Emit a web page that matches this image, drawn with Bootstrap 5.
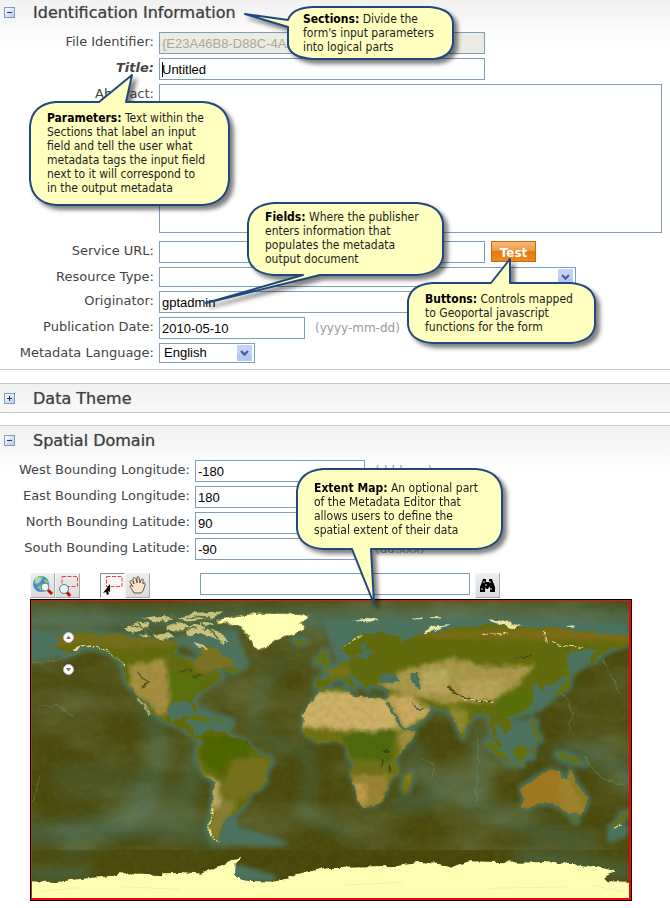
<!DOCTYPE html>
<html lang="en">
<head>
<meta charset="utf-8">
<meta name="viewport" content="width=device-width, initial-scale=1">
<title>Metadata Editor</title>
<link href="https://cdn.jsdelivr.net/npm/bootstrap@5.3.0/dist/css/bootstrap.min.css" rel="stylesheet">
<style>
body{font-family:"DejaVu Sans",Verdana,sans-serif;font-size:13px;color:#444;background:#fff;overflow-x:hidden}
.page{margin-top:-3px}
.panel{border-top:1px solid #c6c6c6;border-bottom:1px solid #c6c6c6;background:linear-gradient(#f1f1f1,#fff 48px);margin-bottom:13px;padding-bottom:6px}
.panel.folded{padding-bottom:0;margin-bottom:12px}
.panel.open-end{border-bottom:0;padding-bottom:7px;margin-bottom:0}
.panel-head{height:28px;padding-left:4px;gap:18px}
.panel-head h2{font-size:16px;line-height:20px;margin:0;padding-top:1px;color:#404040;text-shadow:0 0 1px #8a8a8a}
.toggle{width:11px;height:11px;padding:0;border:1px solid #7f9cc0;background:linear-gradient(135deg,#fff,#b9c9e2);line-height:0;display:block}
.toggle svg{display:block;width:9px;height:9px}
.fields{padding-top:6px;display:grid;row-gap:4px}
.field{display:grid;grid-template-columns:154px minmax(0,1fr);column-gap:5px;align-items:start}
.spatial .field{grid-template-columns:190px minmax(0,1fr)}
.field label{text-align:right;line-height:20px;white-space:nowrap}
.box,.pick{font-family:"Liberation Sans",Arial,sans-serif;font-size:13px;line-height:18px;color:#000;border:1px solid #7f9db9;border-radius:0;box-shadow:none;background-color:#fff}
.box{height:22px;padding:1px 2px;width:100%;max-width:326px;min-height:0}
.box:disabled{background:#ebebe4;color:#aca899;border-color:#7f9db9;opacity:1}
.box.with-caret{background-image:linear-gradient(#000,#000);background-repeat:no-repeat;background-size:1px 15px;background-position:2px 3px}
.box.date{max-width:146px}
.box.degree{max-width:170px}
.box.area{height:149px;max-width:none;resize:none;display:block}
.area-wrap{padding-right:8px;padding-bottom:4px}
.pick{height:20px;padding:0 20px 0 4px;width:100%;max-width:417px;background-position:right 1px center;background-size:17px 16px;background-image:url("data:image/svg+xml,%3Csvg xmlns='http://www.w3.org/2000/svg' viewBox='0 0 17 16'%3E%3Crect x='1' width='15' height='16' rx='1' fill='%23c3d3fd'/%3E%3Crect x='1' y='9' width='15' height='7' fill='%23b5c8f7'/%3E%3Cpath d='M5 6l3.5 3.5L12 6' fill='none' stroke='%234d6185' stroke-width='2.4'/%3E%3C/svg%3E")}
.pick.short{max-width:96px}
.hint{font-size:12px;line-height:22px;color:#999;padding-left:10px}
.url-row{gap:6px}
.go{font-size:12px;font-weight:700;line-height:20px;height:21px;width:45px;padding:1px 0 0;border:1px solid #c86a10;border-radius:0;color:#fff;background:linear-gradient(#f6b878,#ee983f 48%,#e37a12 50%,#ea8b22)}
.go:hover{color:#fff;background:#e37a12}
.tools{padding:13px 0 1px 30px}
.tool{width:25px;height:25px;padding:0;border:1px solid;border-color:#f4f4f4 #a8a8a8 #a8a8a8 #f4f4f4;background:linear-gradient(#ececec,#dcdcdc);border-radius:0}
.tool.pressed{background:#f8f8f8;border-color:#8e8e8e #f4f4f4 #f4f4f4 #8e8e8e}
.tool svg{display:block;width:23px;height:23px}
.tool-gap{width:20px}.tool-gap-wide{width:50px}
.find{max-width:270px;margin-right:5px}
.map-frame{margin-left:30px;margin-right:8px;max-width:602px;border:1px solid #000;line-height:0;background:#4b480f}
.map-frame>svg{display:block;width:100%;height:auto}
.pan{position:absolute;left:32px;width:11px;height:11px;padding:0;border:0;background:none}
.pan svg{display:block;width:11px;height:11px}
.pan.up{top:32px}.pan.down{top:64px}
.note{position:absolute;font-family:"DejaVu Sans Condensed","DejaVu Sans",Tahoma,sans-serif;font-size:12px;line-height:14px;color:#1c1c1c}
.note svg{position:absolute;left:0;top:0;width:100%;height:100%;overflow:visible;filter:drop-shadow(4px 4px 2px rgba(0,0,0,.5))}
.note path{fill:#ffffbf;stroke:#1f497d;stroke-width:2;stroke-linejoin:round}
.note p{position:relative;margin:0;white-space:nowrap;padding:9px 17px}
.note b{color:#000}
.n-section{left:288px;top:7px;width:165px;height:52px}
.n-section p{padding:5px 15px}
.n-param{left:30px;top:102px;width:199px;height:103px}
.n-field{left:248px;top:203px;width:195px;height:72px}
.n-field p{padding-top:7px}
.n-button{left:408px;top:283px;width:187px;height:60px}
.n-map{left:297px;top:469px;width:205px;height:80px}
.n-map p{padding-top:12px}
.n-button p{padding-top:9px}
</style>
<script src="https://cdn.jsdelivr.net/npm/bootstrap@5.3.0/dist/js/bootstrap.bundle.min.js"></script>
</head>
<body class="position-relative">
<main class="page">
  <section class="panel">
    <div class="panel-head d-flex align-items-center">
      <button class="toggle" type="button" aria-label="Collapse Identification Information"><svg viewBox="0 0 9 9"><path d="M2 4.500h5" stroke="#123a78"/></svg></button>
      <h2>Identification Information</h2>
    </div>
    <form class="fields">
      <div class="field"><label for="fid">File Identifier:</label><input id="fid" class="form-control box" disabled value="{E23A46B8-D88C-4AAD-9D5C-6E60B8C1F0A4}"></div>
      <div class="field"><label for="ttl" class="fw-bold fst-italic">Title:</label><input id="ttl" class="form-control box with-caret" value="Untitled"></div>
      <div class="field"><label for="abs">Abstract:</label><div class="area-wrap"><textarea id="abs" class="form-control box area"></textarea></div></div>
      <div class="field"><label for="url">Service URL:</label><div class="d-flex url-row"><input id="url" class="form-control box"><button type="button" class="btn go flex-shrink-0">Test</button></div></div>
      <div class="field"><label for="res">Resource Type:</label><select id="res" class="form-select pick"><option></option></select></div>
      <div class="field"><label for="org">Originator:</label><input id="org" class="form-control box" value="gptadmin"></div>
      <div class="field"><label for="pub">Publication Date:</label><div class="d-flex"><input id="pub" class="form-control box date" value="2010-05-10"><span class="hint">(yyyy-mm-dd)</span></div></div>
      <div class="field"><label for="lang">Metadata Language:</label><select id="lang" class="form-select pick short"><option>English</option></select></div>
    </form>
  </section>

  <section class="panel folded">
    <div class="panel-head d-flex align-items-center">
      <button class="toggle" type="button" aria-label="Expand Data Theme"><svg viewBox="0 0 9 9"><path d="M2 4.500h5M4.500 2v5" stroke="#123a78"/></svg></button>
      <h2>Data Theme</h2>
    </div>
  </section>

  <section class="panel open-end spatial">
    <div class="panel-head d-flex align-items-center">
      <button class="toggle" type="button" aria-label="Collapse Spatial Domain"><svg viewBox="0 0 9 9"><path d="M2 4.500h5" stroke="#123a78"/></svg></button>
      <h2>Spatial Domain</h2>
    </div>
    <form class="fields">
      <div class="field"><label for="w">West Bounding Longitude:</label><div class="d-flex"><input id="w" class="form-control box degree" value="-180"><span class="hint">(ddd.xxx)</span></div></div>
      <div class="field"><label for="e">East Bounding Longitude:</label><div class="d-flex"><input id="e" class="form-control box degree" value="180"></div></div>
      <div class="field"><label for="n">North Bounding Latitude:</label><div class="d-flex"><input id="n" class="form-control box degree" value="90"></div></div>
      <div class="field"><label for="s">South Bounding Latitude:</label><div class="d-flex"><input id="s" class="form-control box degree" value="-90"><span class="hint">(dd.xxx)</span></div></div>
    </form>

    <div class="tools d-flex align-items-start">
      <button type="button" class="tool flex-shrink-0" aria-label="Zoom to world"><svg viewBox="0 0 23 23"><circle cx="10" cy="10" r="8" fill="#3b8fd0"/><path d="M5 4q4-3 7-1l-1 3-3 1-1 4-4-2zM13 5l4 2v4l-3-1zM6 13l4-2 2 3-2 3z" fill="#8fc46c"/><circle cx="7" cy="6" r="3" fill="#dff2ff" opacity=".45"/><path d="M17 16l4 4" stroke="#c40d0d" stroke-width="3"/><circle cx="14" cy="13" r="4" fill="#e8f5fb" stroke="#687b88"/></svg></button>
      <button type="button" class="tool flex-shrink-0" aria-label="Zoom to rectangle"><svg viewBox="0 0 23 23"><path d="M6 2.500h15.500v10H6z" fill="none" stroke="#e8414b" stroke-dasharray="4 1.500"/><path d="M10 17l4 5" stroke="#c40d0d" stroke-width="3"/><circle cx="8" cy="15" r="4.500" fill="#e2f4fb" stroke="#64777f"/></svg></button>
      <span class="tool-gap flex-shrink-0"></span>
      <button type="button" class="tool pressed flex-shrink-0" aria-label="Draw extent"><svg viewBox="0 0 23 23"><path d="M5.500 2.500h15.500v10H5.500z" fill="none" stroke="#e8414b" stroke-dasharray="4 1.500"/><path d="M9 10v8l-2-1 1 3-2 1-1-3-3 1z" fill="#000"/></svg></button>
      <button type="button" class="tool flex-shrink-0" aria-label="Pan"><svg viewBox="0 0 23 23"><path d="M8 19c-1-3-4-5-4-7 0-1 2-1 3 1L4 8c0-2 2-2 3 0l1 2-1-5c0-2 2-2 3 0l1 4V4c0-2 2-2 2 0l1 5 1-3c1-2 3-1 2 1v3c1-2 3-1 2 1-1 3-1 5-4 8z" fill="#fde3c8" stroke="#5f5147"/></svg></button>
      <span class="tool-gap-wide flex-shrink-0"></span>
      <input class="form-control box find" aria-label="Find place">
      <button type="button" class="tool flex-shrink-0" aria-label="Find"><svg viewBox="0 0 23 23"><path d="M7 5h3v3h3V5h3l1 3 2 5v5h-5v-5h-1l-1 2h-2l-1-2v5H4v-5l2-5z" fill="#000"/><path d="M8 7v2M14 7v2M6 14v2M15 14v2M10 10v2" stroke="#ddd"/></svg></button>
    </div>

    <div class="map-frame position-relative">
      <svg viewBox="0 0 600 300" role="img" aria-label="World map">
        <defs>
          <filter id="rough" x="-5%" y="-5%" width="110%" height="110%"><feTurbulence type="fractalNoise" baseFrequency=".035" numOctaves="3" seed="4" result="t"/><feDisplacementMap in="SourceGraphic" in2="t" scale="20" xChannelSelector="R" yChannelSelector="G"/></filter>
          <filter id="soft" x="-20%" y="-20%" width="140%" height="140%"><feGaussianBlur stdDeviation="7"/></filter>
          <filter id="softer" x="-40%" y="-40%" width="180%" height="180%"><feGaussianBlur stdDeviation="20"/></filter>
          <filter id="grain" x="0" y="0" width="100%" height="100%"><feTurbulence type="fractalNoise" baseFrequency=".05 .06" numOctaves="4" seed="9"/><feColorMatrix values="0 0 0 0 .16  0 0 0 0 .18  0 0 0 0 0  1.300 0 0 0 -.5"/></filter>
          <filter id="sheen" x="0" y="0" width="100%" height="100%"><feTurbulence type="fractalNoise" baseFrequency=".004 .008" numOctaves="5" seed="23"/><feColorMatrix values="0 0 0 0 .29  0 0 0 0 .41  0 0 0 0 .3  2.200 0 0 0 -.8"/></filter>
          <path id="america" d="M105 125L140 115 200 115 250 118 300 120 340 125 390 128 440 137 475 143 460 170 480 187 508 190 520 208 530 190 548 178 538 158 562 152 590 164 612 184 640 195 648 210 600 222 572 236 600 232 612 244 582 262 560 276 542 292 535 303 520 314 526 334 530 350 515 336 503 320 480 318 455 326 444 340 442 360 455 378 478 376 488 362 505 362 498 385 514 394 520 415 545 422 570 405 610 410 640 425 680 440 695 460 720 478 754 490 757 505 740 525 737 560 720 580 690 598 680 622 660 645 635 660 612 680 602 700 595 728 602 742 580 742 566 722 564 690 572 650 580 600 582 562 560 545 540 517 528 490 534 460 545 438 518 424 490 402 460 387 432 378 405 358 385 335 365 312 345 290 320 265 314 240 310 215 290 190 265 170 230 160 200 156 170 165 130 187 150 166 115 160 105 150 120 140Z"/>
          <path id="eurasia" d="M-42 250L-5 250 0 240-18 230 8 215 30 205 60 200 50 180 34 165 60 140 100 118 150 112 208 124 206 142 260 120 330 112 370 100 420 92 480 88 540 95 600 98 660 98 700 106 760 110 820 118 897 124 897 148 850 160 815 178 796 200 780 202 786 180 808 160 760 165 700 180 720 210 712 240 690 252 660 270 645 260 645 285 630 280 602 262 612 290 612 322 590 345 560 360 535 364 546 400 525 415 508 390 498 392 496 425 518 452 510 460 488 428 478 365 450 356 432 364 410 392 404 428 396 430 382 398 370 365 348 345 300 333 304 347 270 385 224 402 200 365 170 312 184 286 140 275 118 268 114 285 94 265 70 240 50 240 82 272 70 282 40 252 10 252-5 272-25 285-42 278Z"/>
          <path id="africa" d="M-35 290L-5 282 50 278 60 300 100 310 150 308 172 316 182 345 200 372 220 408 258 405 245 435 215 470 200 492 205 530 180 560 170 592 150 620 130 634 100 636 85 618 75 580 62 545 68 510 50 482 50 450 20 435-10 440-40 442-62 430-82 408-82 370-70 340-50 310Z"/>
          <path id="australia" d="M572 580L600 560 640 535 660 525 690 530 695 550 712 555 720 525 735 560 760 590 772 612 765 640 745 658 715 655 695 640 665 625 625 625 590 642 575 637 582 610Z"/>
          <path id="isles" d="M680 475l30 2 40 20 15 12-30-5-40-10zM550 465l25-18 18 10-6 30-20 8-17-10zM470 435l30 20 35 35-6 10-25-18-30-32zM535 500l45 8-2 5-44-6zM605 370l10 15-5 20 20 15 5 18-15-5-15-25zM600 460l15-3-10 12 5 15-10-5zM710 205l12 30-8 15 8 10-8 22-30 12-15 5 25-22 15-20-3-30zM222 545l22-15 8 10-15 45-12 8-8-15zM725 668l22 2-8 14zM870 655l25-5-10 22-25 20-20 5 30-25zM-25 170l15-2 2 20 10 20-28 5zM-45 190l14-2 0 16-16 2zM-110 135l35-3 5 8-25 8z"/>
          <clipPath id="clipA"><use href="#america"/></clipPath>
          <clipPath id="clipE"><use href="#eurasia"/><use href="#africa"/><use href="#australia"/><use href="#isles"/></clipPath>
        </defs>
        <rect width="600" height="300" fill="#4b490f"/>
        <g transform="translate(-11 -5) scale(.3333)">
          <g filter="url(#softer)" fill="none" stroke="#4b6d54" stroke-linecap="round">
            <path d="M30 75H1850" stroke-width="70" opacity=".9"/>
            <path d="M400 370Q430 480 380 600 340 700 150 740M540 480L500 600" stroke-width="75" opacity=".55"/>
            <path d="M150 560Q300 540 480 640" stroke-width="110" opacity=".3"/>
            <path d="M800 200Q690 290 710 390 760 470 860 460 890 540 850 650L1000 720" stroke-width="26" opacity=".75"/>
            <path d="M1130 620Q1200 650 1290 560 1400 690 1700 740M1180 460L1250 620M1380 430L1375 640" stroke-width="48" opacity=".65"/>
            <path d="M30 720Q400 660 600 730M1620 480Q1750 450 1830 560" stroke-width="65" opacity=".65"/>
            <path d="M30 835Q120 840 200 830M640 845H800M1500 782L1830 830" stroke-width="30"/>
          </g>
          <rect x="33" y="15" width="1800" height="750" filter="url(#sheen)" opacity=".28"/>
          <rect x="560" y="768" width="860" height="90" fill="#49460d" opacity=".8"/>
          <g filter="url(#soft)" fill="#4b7364" stroke="#4b7364" stroke-width="18" stroke-linejoin="round">
            <use href="#america"/><path d="M33 110L120 120 190 160 33 195zM470 130L640 110 680 210 640 235 600 210zM440 320L560 350 640 380 620 410 540 410 440 370z"/>
            <path d="M600 690L640 660 650 705 730 725 790 745 600 740z"/>
            <g transform="translate(930 0)"><use href="#eurasia"/><use href="#africa" stroke-width="10"/><use href="#australia"/><use href="#isles"/>
            <path d="M-10 80L220 80 700 85 890 95 890 120 200 140 30 210zM600 260l100 20-70 60-60 20zM490 390L620 380 610 490 540 490zM700 180l90-20 0 30-70 50zM840 700l50 0-10 20-40 15z"/></g>
            <path d="M640 815L680 825 760 850 640 850z"/>
          </g>
          <g fill="none" stroke="#71917b" stroke-width="4" opacity=".4" filter="url(#rough)"><path d="M33 205Q120 200 190 165M60 335Q130 320 160 370M1370 620L1375 430M1620 290Q1670 340 1650 400M1745 190L1800 300M60 540L40 620M1200 490Q1260 500 1230 560M1690 480Q1730 560 1810 570"/></g>
          <g filter="url(#rough)">
            <use href="#america" fill="#62690d"/>
            <g clip-path="url(#clipA)"><g filter="url(#soft)">
              <path d="M105 110H480V150L300 160 100 150z" fill="#756d1c"/><path d="M480 140h170v90H530z" fill="#7b7226"/>
              <path d="M330 210L440 190 450 330 430 370 330 280z" fill="#a58f42"/><path d="M450 240L570 240 520 310 450 320z" fill="#596f0d"/>
              <path d="M550 420H690V500L620 550 540 500z" fill="#4d6506"/><path d="M640 490H750V560L650 620 600 590z" fill="#77701b"/><path d="M585 600L650 620 600 740 560 720z" fill="#867d31"/><path d="M525 470L560 540 600 560 600 640 570 640 565 560z" fill="#b9a562"/>
            </g><path d="M160 163L210 155 260 168 315 215M578 640L566 700 580 740 600 742" fill="none" stroke="#e6dfa0" stroke-width="7" stroke-dasharray="18 5 6 4"/><path d="M350 230l35 35-20 15M480 230l35-5-15 20M515 245l35-5" fill="none" stroke="#4a4f14" stroke-width="4"/></g>
            <path d="M495 370l35-12 45 18-10 3zM575 370l40 5-20 8zM600 225l35-10 30 10-18 8z" fill="#62700f"/>
            <path d="M355 310l20 25 15 20" fill="none" stroke="#b2a56a" stroke-width="6"/>
          </g>
          <g transform="translate(930 0)"><g filter="url(#rough)">
            <use href="#eurasia" fill="#606b0d"/><use href="#africa" fill="#6d7014"/><use href="#australia" fill="#a17823"/><use href="#isles" fill="#64700f"/>
            <g clip-path="url(#clipE)"><g filter="url(#soft)">
              <path d="M210 110L900 90V140L300 130z" fill="#7b6c14"/><path d="M-40 250H60V210H-20z" fill="#78731d"/>
              <path d="M-100 290L60 290 170 310 215 400 130 410-100 395z" fill="#cdb169"/><path d="M170 300L240 300 310 350 225 405z" fill="#cbaa60"/>
              <path d="M215 225L370 190 480 215 620 210 570 260 500 320 420 320 370 330 200 290 140 275z" fill="#aa984c"/><path d="M280 230L350 220 360 290 270 290z" fill="#bdaa61"/><path d="M370 260L530 255 500 310 420 320z" fill="#b9a45a"/><path d="M350 335L420 345 400 425 370 390z" fill="#8f8830"/>
              <path d="M500 300L620 280 590 360 490 360z" fill="#586e0c"/>
              <path d="M40 420L195 400 180 500 60 490z" fill="#4e680a"/><path d="M205 410L270 400 210 490z" fill="#a38d40"/><path d="M60 540L180 540 160 640 80 640z" fill="#9b8236"/><path d="M70 560L110 570 110 630 80 620z" fill="#bd9c4c"/>
              <path d="M690 530L780 580 760 650 700 640 690 590z" fill="#a08332"/><path d="M700 520l35 0 40 90-10 40z" fill="#8c7d20"/>
              <path d="M222 545L250 530 230 590z" fill="#9b7c20"/>
            </g>
            <path d="M355 275Q400 320 490 320M555 185l50-5" fill="none" stroke="#4a4715" stroke-width="5"/><path d="M400 310l90 12M640 110l15 30 50 15 50 5M35 160l60-35M460 118l80-3" fill="none" stroke="#e0d390" stroke-width="4" stroke-dasharray="14 6"/><ellipse cx="170" cy="468" rx="8" ry="6" fill="#36431b"/><path d="M155 490v22M178 510v25" stroke="#36431b" stroke-width="4"/></g>
            <g fill="#497061"><path d="M148 245l25-12 20 8 18 14-25 8-36 0zM245 238l18-5 8 18-6 15 8 15-18 2-10-22zM172 322l8 0 40 78-8 2zM245 318l20 18 22 0-10 10-16-2zM92 150l22-14-6 25 30 8-30 22-42-2 30-14z"/></g>
          </g></g>
          <rect x="33" y="15" width="1800" height="900" filter="url(#grain)" opacity=".3"/>
          <g filter="url(#rough)">
            <path d="M315 100l35-18 40 5-10 18-45 8zM370 72l60-10 30 8-40 12zM440 90l45-8 20 12-25 16-40-8zM400 120l45-5 25 10-40 12zM470 65l60-12 80-4-30 20-60 10zM500 100l60-22 20 10-35 12 60 15 18 25-40-10-35-16-50 8zM520 140l30 10 20 12-35-4zM350 120l30-4 10 10zM570 125l45 5-10 15z" fill="#c9c27c"/>
            <path d="M420 75L470 90M450 60L520 85M330 90L400 110M460 110L530 100M500 65L570 70M350 80L380 118M545 80L600 140" stroke="#5b7045" stroke-width="5"/>
            <path d="M590 75L650 62 710 55 790 55 872 62 845 80 855 100 820 120 782 130 750 143 732 163 720 170 702 160 696 140 682 117 665 97 635 87 595 87Z" fill="#feffb4" stroke="#827b38" stroke-width="3"/>
          </g>
          <g transform="translate(930 0)" filter="url(#rough)">
            <path d="M70 75l50-8 25 6-30 10zM280 115l30-22 50-6-35 16-35 18zM475 70l40 4 60 20-35 4-40-14zM700 97l40-3-10 6z" fill="#e9e5a3"/><path d="M245 68h35M300 68h35" stroke="#d5d494" stroke-width="4"/>
            <path d="M850 700l25-12" stroke="#d8cf8c" stroke-width="5"/>
          </g>
          <path filter="url(#rough)" d="M20 859L110 861 180 852 250 846 300 838 370 839 420 844 425 832 480 831 550 836 575 822 610 807 640 792 665 785 647 807 645 842 680 857 760 860 800 851 850 832 930 819 1060 817 1130 816 1150 806 1200 801 1260 808 1300 816 1330 804 1350 799 1430 801 1500 803 1570 801 1650 806 1730 816 1785 829 1750 844 1760 859 1850 861V940H20Z" fill="#ffffb3"/>
          <path d="M60 890l120-12M300 875l180 8M980 870l170-8M1400 880l240-4M1710 870l100 20" stroke="#f3f2aa" stroke-width="3"/>
        </g>
        <path d="M0 .500H600M.500 0V300" stroke="#c9230c"/><path d="M599 0V299H0" fill="none" stroke="#f00" stroke-width="2"/>
      </svg>
      <button type="button" class="pan up" aria-label="Pan up"><svg viewBox="0 0 11 11"><circle cx="5.500" cy="5.500" r="5" fill="#fff" stroke="#b9b9c4"/><path d="M3 7l2.500-3.500L8 7z" fill="#777"/></svg></button>
      <button type="button" class="pan down" aria-label="Pan down"><svg viewBox="0 0 11 11"><circle cx="5.500" cy="5.500" r="5" fill="#fff" stroke="#b9b9c4"/><path d="M3 4l2.500 3.500L8 4z" fill="#777"/></svg></button>
    </div>
  </section>
</main>

<aside class="note n-section"><svg><path d="M24 0H142Q165 2 165 17V36Q163 50 146 52H24Q2 50 0 38V20L-43 7 0 13Q4 1 24 0Z"/></svg><p><b>Sections:</b> Divide the<br>form's input parameters<br>into logical parts</p></aside>
<aside class="note n-param"><svg><path d="M26 0H69L102-27 96 0H173Q197 2 199 24V78Q197 101 173 103H26Q2 101 0 78V24Q2 2 26 0Z"/></svg><p><b>Parameters:</b> Text within the<br>Sections that label an input<br>field and tell the user what<br>metadata tags the input field<br>next to it will correspond to<br>in the output metadata</p></aside>
<aside class="note n-field"><svg><path d="M26 0H169Q193 2 195 20V53Q193 70 169 72H72L-42 100 55 72H26Q2 70 0 53V20Q2 2 26 0Z"/></svg><p><b>Fields:</b> Where the publisher<br>enters information that<br>populates the metadata<br>output document</p></aside>
<aside class="note n-button"><svg><path d="M24 0H83L102-24V0H163Q185 2 187 18V42Q185 58 163 60H24Q2 58 0 42V18Q2 2 24 0Z"/></svg><p><b>Buttons:</b> Controls mapped<br>to Geoportal javascript<br>functions for the form</p></aside>
<aside class="note n-map"><svg><path d="M26 0H179Q203 2 205 22V60Q203 78 179 80H74L77 135 55 80H26Q2 78 0 60V22Q2 2 26 0Z"/></svg><p><b>Extent Map:</b> An optional part<br>of the Metadata Editor that<br>allows users to define the<br>spatial extent of their data</p></aside>
</body>
</html>
